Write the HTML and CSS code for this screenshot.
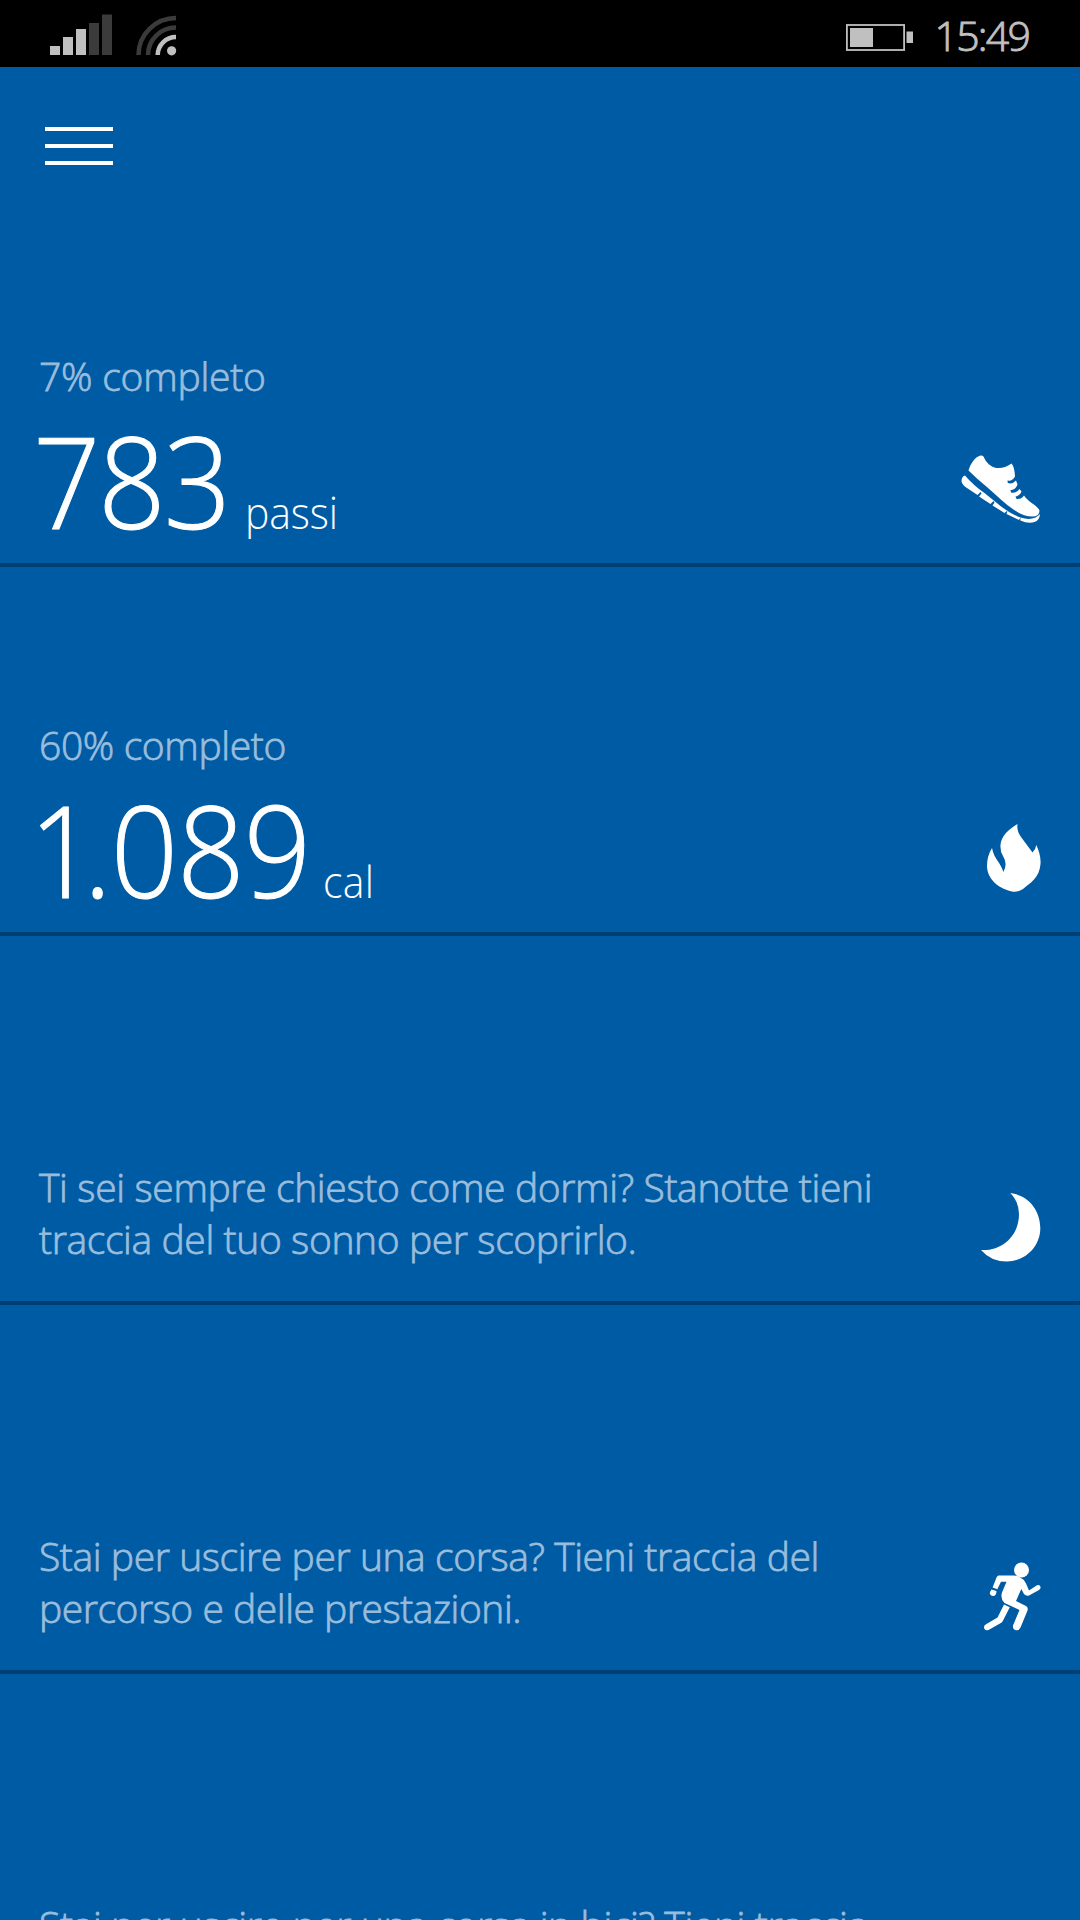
FILE: index.html
```html
<!DOCTYPE html>
<html lang="it">
<head>
<meta charset="utf-8">
<title>Health</title>
<link rel="stylesheet" href="styles.css">
</head>
<body>
<header class="status-bar">
  <svg class="signals" width="130" height="42" viewBox="0 0 130 42">
    <g fill="#c0c0c0"><path d="M0 32h10v9H0zM13 23h10v18H13zM26 15h10v26H26z"/></g>
    <g fill="#3b3b3b"><path d="M39 9h10v32H39zM52 .5h10v40.500H52z"/></g>
    <g fill="none" stroke-width="4.500">
      <path stroke="#3b3b3b" d="M88.500 41A37.500 37 0 0 1 126 4M98 41A28 27.500 0 0 1 126 13.500"/>
      <path stroke="#c0c0c0" d="M107.700 41A18.300 18 0 0 1 126 23"/>
    </g>
    <circle cx="121.600" cy="36.800" r="4.600" fill="#c0c0c0"/>
  </svg>
  <div class="status-right">
    <svg width="68" height="28" viewBox="0 0 68 28">
      <rect x=".9" y="1" width="57.200" height="25" fill="none" stroke="#c0c0c0" stroke-width="1.800"/>
      <path fill="#c0c0c0" d="M4 4h23v19H4zM60.500 7.500h6.500V19h-6.500z"/>
    </svg>
    <span class="clock">15:49</span>
  </div>
</header>
<nav class="app-bar">
  <button class="menu" aria-label="Menu"><i></i><i></i><i></i></button>
</nav>
<main>
  <section class="tile">
    <div class="text goal">
      <p class="caption"><span class="goal1">7% completo</span></p>
      <p class="metric"><span class="value steps">783</span><span class="unit passi">passi</span></p>
    </div>
    <svg class="icon" width="80" height="70" viewBox="20.500 25.500 80 70" fill="#fff" overflow="visible">
      <path d="M28 40C30 33 35 26 40 25Q43 24.500 44 28C49 38 60 41 71 33Q74 36 74.500 46Q72 51 67 50L67.300 52.500Q72 54 75.500 50L77 54Q75 59.500 70 59.500L70.500 62Q76 63 79 58.500L81 61Q79 65.500 75 66L76 68.500Q81 69 83.500 65C87 71 97 75 99 80Q99 86 92 86C76 86 61 69 47 57Q37 49 28 40z"/>
      <path d="M24.500 45Q21 46 21 51Q22 55 28 58.500L37 64.500L40 61.500L41 63L38.500 66L50 73.500L53 70.500L54 72L52 75L64 82.500L67 80L66 83.500L78.500 89.500L80 87L79.800 90Q88 93.500 94 91.500Q99 90 99.500 83.500Q93 91 80 87C66 82 55 71 44 62.500Q33 55 24.500 45z"/>
    </svg>
  </section>
  <section class="tile">
    <div class="text goal">
      <p class="caption"><span class="goal2">60% completo</span></p>
      <p class="metric"><span class="value calories"><span class="lead">1</span>.089</span><span class="unit cal">cal</span></p>
    </div>
    <svg class="icon" width="54" height="70" viewBox="27 25 54 70" fill="#fff" overflow="visible">
      <path d="M57.500 24Q56.500 31 61 37L72.500 52.500Q75.500 50 76.300 45C79 51 81 57 80.500 64C79.500 78 70 83 63 89Q58 92.500 52 91.500C36 88 27 77 27 66Q27 56 32 48C34 59 41 63 43.300 72Q48 64 43 56Q40 51 40.500 45C41 36 49 29 57.500 24z"/>
    </svg>
  </section>
  <section class="tile">
    <p class="text message"><span class="sleep1">Ti sei sempre chiesto come dormi? Stanotte tieni</span><span class="sleep2">traccia del tuo sonno per scoprirlo.</span></p>
    <svg class="icon" width="60" height="70" viewBox="21 24 60 70" fill="#fff" overflow="visible">
      <path d="M50.300 23C68 25 80.300 40 80.300 58C80.300 77 65 91.500 46.500 91.500Q31 91.500 21 80C43 81 59 65 59 44Q59 32 50.300 23z"/>
    </svg>
  </section>
  <section class="tile">
    <p class="text message"><span class="run1">Stai per uscire per una corsa? Tieni traccia del</span><span class="run2">percorso e delle prestazioni.</span></p>
    <svg class="icon" width="57" height="70" viewBox="24 22.500 57 70" fill="#fff" overflow="visible">
      <circle cx="61.500" cy="29.500" r="7.500"/>
      <path d="M38.500 35H54Q58 35.500 61 37.500Q64.500 39 66 43L69 50L77 44.800Q80 44 80.500 46.500Q81 48 79 49.500L69 55Q66 56 64 53.500L61.300 48.500L56 60.500L66 65.500Q68.500 67 67.500 70L60.500 87Q59 90.300 56 89.800Q52.500 89 53 85L59.500 69.500L44.500 62.500Q40 58 42 52L46.500 41.300H41L37.300 48.800L32.600 47L36.500 37Q37 35.500 38.500 35z"/>
      <path d="M31.500 49L36.500 50.500Q36.500 55.500 33 55.500Q29 54.500 30 51.500zM44 64L49.800 66.700L42.800 80.500Q42 82 40 83L28.500 89.500Q25 90.500 24 87.500Q23.500 85 26 83.800L37.500 77z"/>
    </svg>
  </section>
  <section class="tile">
    <p class="text message"><span class="bike1">Stai per uscire per una corsa in bici? Tieni traccia</span><span>del percorso e delle prestazioni.</span></p>
  </section>
</main>
</body>
</html>
```
FILE: styles.css
```css
* { box-sizing: border-box; }
html, body { height: 100%; }
body {
  margin: 0;
  overflow: hidden;
  background: #005ba5;
  color: #fff;
  font-family: "Open Sans", "Noto Sans", sans-serif;
  font-weight: 300;
}
p { margin: 0; }
.status-bar {
  height: 67px;
  background: #000;
  display: flex;
  justify-content: space-between;
  padding: 14px 51px 0 50px;
}
.status-right { display: flex; gap: 21px; padding-top: 10px; }
.clock {
  color: #c0c0c0;
  font-size: 41px;
  line-height: 40px;
  margin-top: -9px;
  letter-spacing: -1.8px;
  -webkit-text-stroke: 0.9px #c0c0c0;
}
.app-bar { height: 131px; padding: 60px 45px; }
.menu {
  display: flex;
  flex-direction: column;
  gap: 13px;
  width: 67.5px;
  padding: 0;
  border: 0;
  background: none;
}
.menu i { height: 4px; width: 100%; background: #fff; }
.tile {
  height: 369px;
  border-bottom: 4px solid #003f73;
  display: flex;
  justify-content: space-between;
  align-items: flex-end;
  padding: 0 39px 37px;
}
.icon { flex: none; }
.goal { margin-bottom: -37px; }
.caption, .message {
  color: #99bddb;
  font-size: 39px;
  line-height: 52px;
  -webkit-text-stroke: 0.8px #99bddb;
}
.caption { margin-bottom: 27px; }
.message { margin-bottom: -1px; }
.message span { display: block; white-space: nowrap; }
.goal1 { letter-spacing: -0.22px; }
.goal2 { letter-spacing: -0.36px; }
.sleep1 { letter-spacing: -0.35px; }
.sleep2 { letter-spacing: -0.38px; }
.run1 { letter-spacing: -0.41px; }
.run2 { letter-spacing: -0.46px; }
.bike1 { letter-spacing: -0.36px; }

.metric { display: flex; align-items: baseline; line-height: 102px; }
.value, .unit { transform-origin: left; transform: scaleX(0.93); }
.value { font-size: 127px; letter-spacing: -0.9px; -webkit-text-stroke: 1px #fff; }
.unit { font-size: 44px; letter-spacing: -0.1px; }
.steps { margin-left: -6px; letter-spacing: -2.2px; }
.calories { margin-left: -10px; }
.lead { letter-spacing: -14px; }
.passi { margin-left: 1px; }
.cal { margin-left: -9px; letter-spacing: 0.3px; }
```
